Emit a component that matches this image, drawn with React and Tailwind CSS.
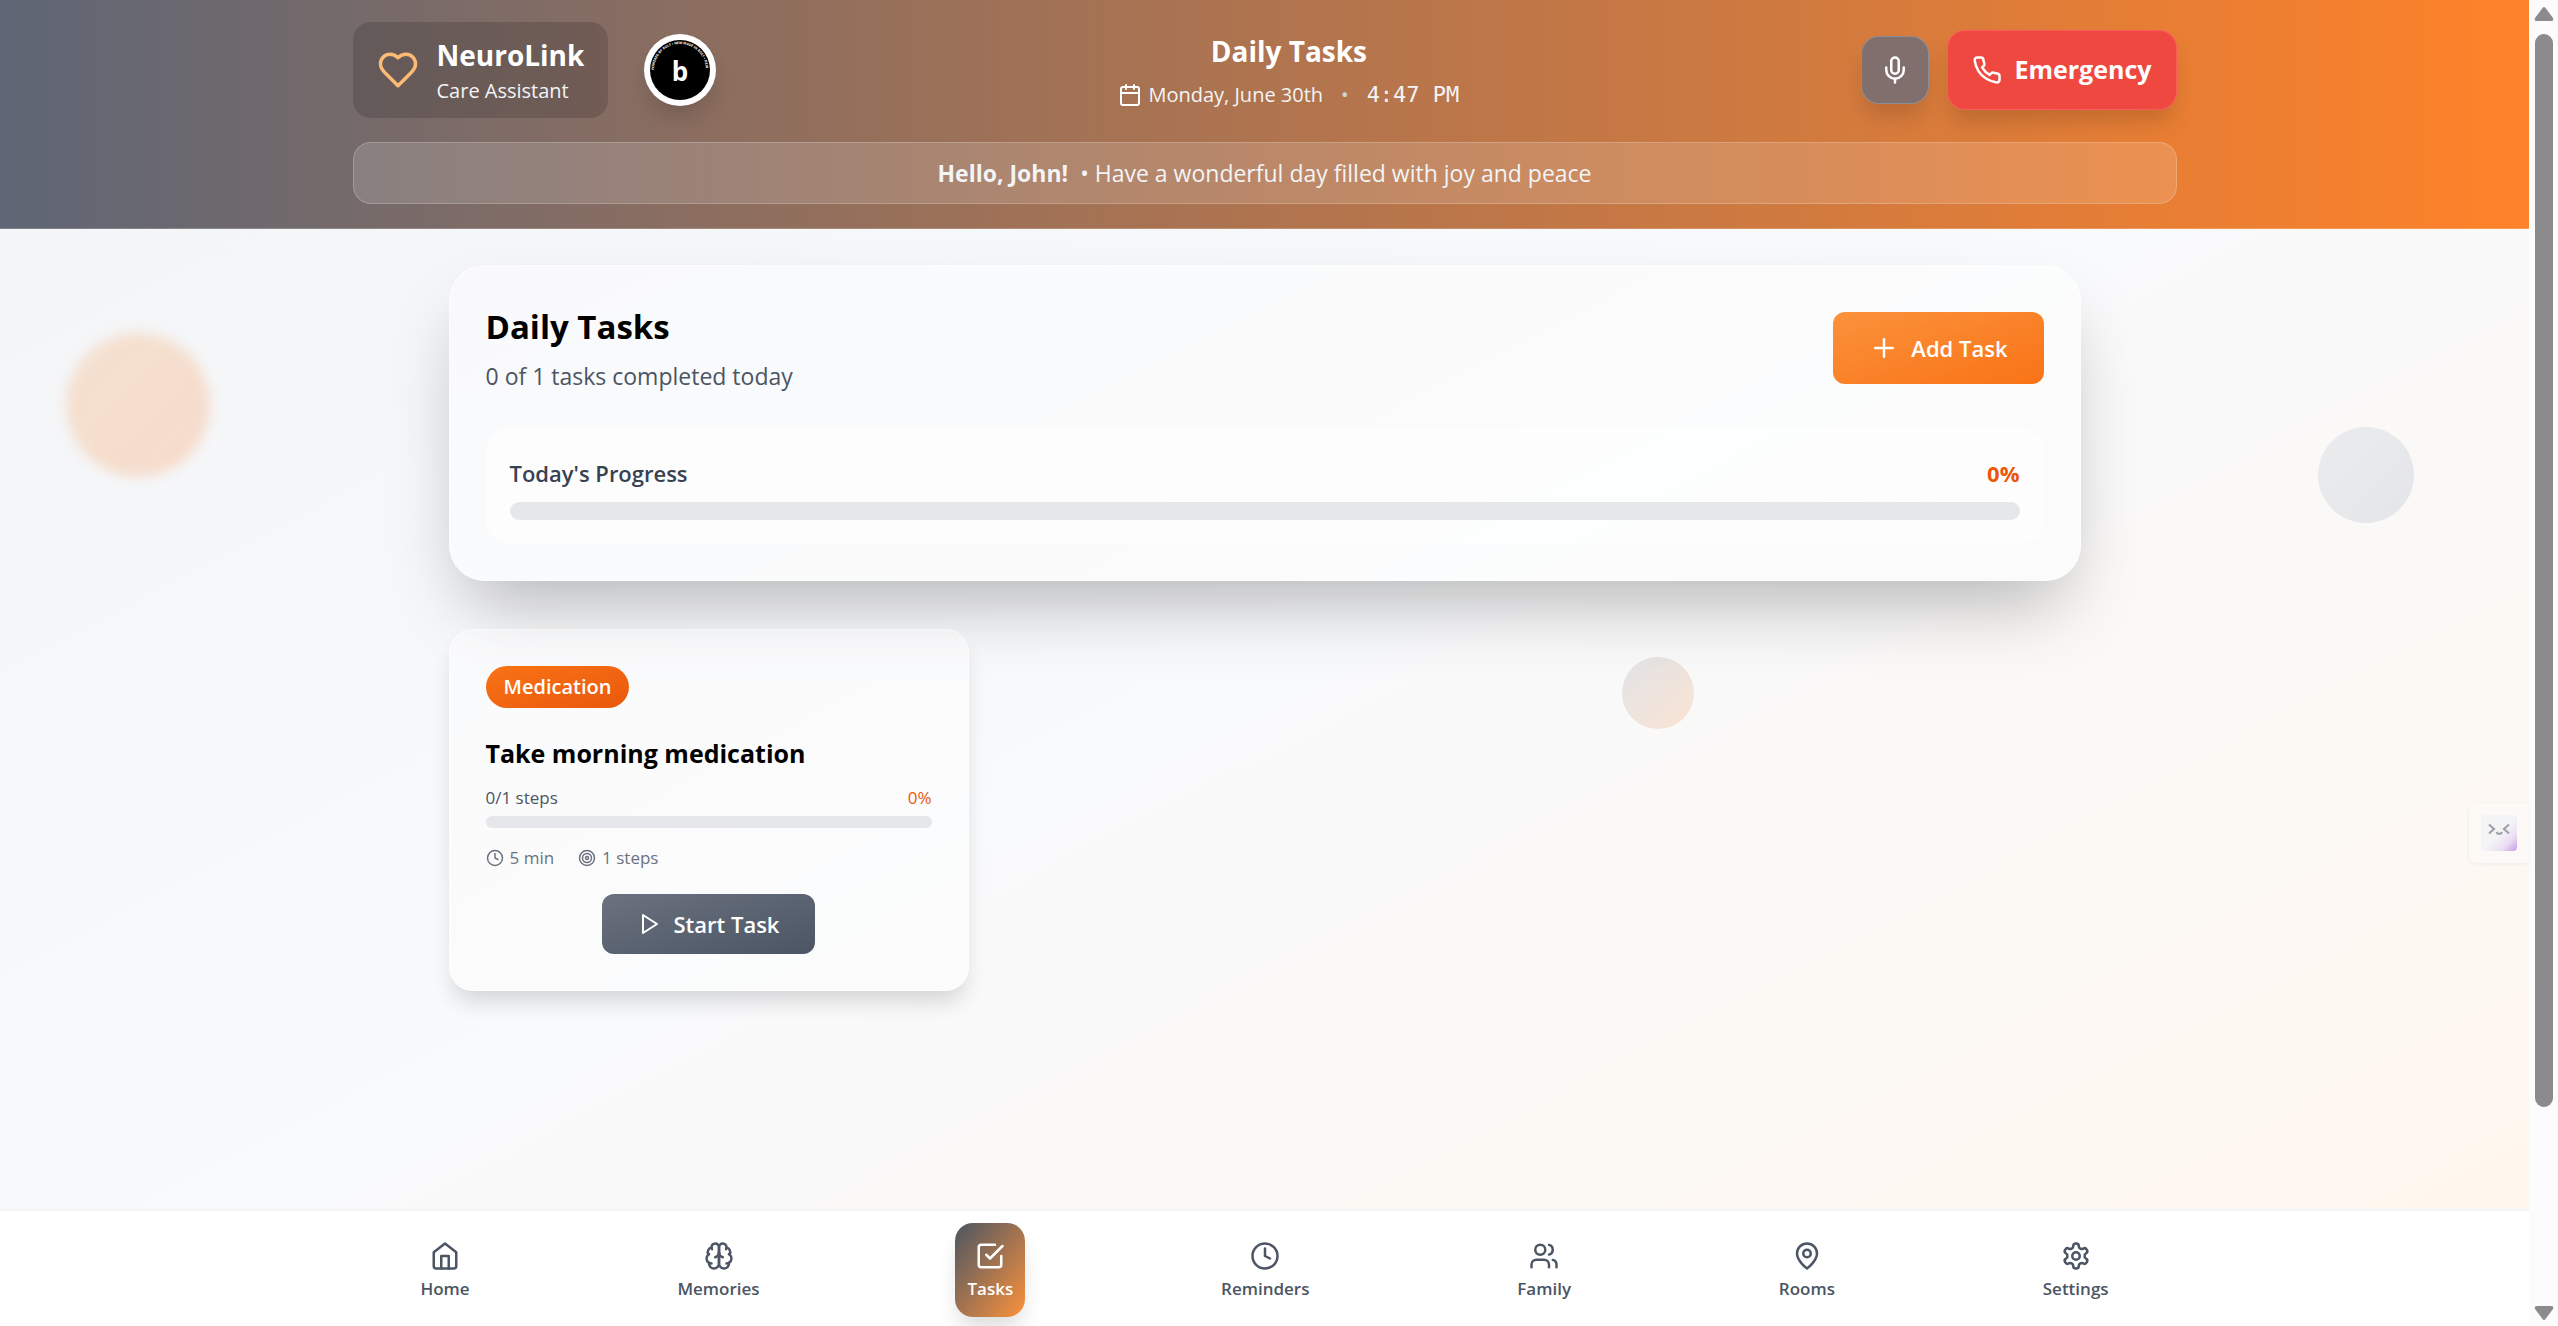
import { Calendar, Clock, Mic, Plus, Target, Users } from "lucide-react";

function Icon({ size, className, children }) {
  return (
    <svg
      width={size}
      height={size}
      viewBox="0 0 24 24"
      fill="none"
      stroke="currentColor"
      strokeWidth="2"
      strokeLinecap="round"
      strokeLinejoin="round"
      className={className}
      aria-hidden="true"
    >
      {children}
    </svg>
  );
}

function HeartIcon(props) {
  return (
    <Icon {...props}>
      <path d="M19 14c1.49-1.46 3-3.21 3-5.5A5.5 5.5 0 0 0 16.5 3c-1.76 0-3 .5-4.5 2-1.5-1.5-2.74-2-4.5-2A5.5 5.5 0 0 0 2 8.5c0 2.3 1.5 4.05 3 5.5l7 7Z" />
    </Icon>
  );
}

function PhoneIcon(props) {
  return (
    <Icon {...props}>
      <path d="M22 16.92v3a2 2 0 0 1-2.18 2 19.79 19.79 0 0 1-8.63-3.07 19.5 19.5 0 0 1-6-6 19.79 19.79 0 0 1-3.07-8.67A2 2 0 0 1 4.11 2h3a2 2 0 0 1 2 1.72 12.84 12.84 0 0 0 .7 2.81 2 2 0 0 1-.45 2.11L8.09 9.91a16 16 0 0 0 6 6l1.27-1.27a2 2 0 0 1 2.11-.45 12.84 12.84 0 0 0 2.81.7A2 2 0 0 1 22 16.92z" />
    </Icon>
  );
}

function PlayIcon(props) {
  return (
    <Icon {...props}>
      <polygon points="5 3 19 12 5 21 5 3" />
    </Icon>
  );
}

function HomeIcon(props) {
  return (
    <Icon {...props}>
      <path d="m3 9 9-7 9 7v11a2 2 0 0 1-2 2H5a2 2 0 0 1-2-2z" />
      <polyline points="9 22 9 12 15 12 15 22" />
    </Icon>
  );
}

function BrainIcon(props) {
  return (
    <Icon {...props}>
      <path d="M12 5a3 3 0 1 0-5.997.125 4 4 0 0 0-2.526 5.77 4 4 0 0 0 .556 6.588A4 4 0 1 0 12 18Z" />
      <path d="M12 5a3 3 0 1 1 5.997.125 4 4 0 0 1 2.526 5.77 4 4 0 0 1-.556 6.588A4 4 0 1 1 12 18Z" />
      <path d="M15 13a4.5 4.5 0 0 1-3-4 4.5 4.5 0 0 1-3 4" />
      <path d="M17.599 6.5a3 3 0 0 0 .399-1.375" />
      <path d="M6.003 5.125A3 3 0 0 0 6.401 6.5" />
      <path d="M3.477 10.896a4 4 0 0 1 .585-.396" />
      <path d="M19.938 10.5a4 4 0 0 1 .585.396" />
      <path d="M6 18a4 4 0 0 1-1.967-.516" />
      <path d="M19.967 17.484A4 4 0 0 1 18 18" />
    </Icon>
  );
}

function CheckIcon(props) {
  return (
    <Icon {...props}>
      <path d="m9 11 3 3L22 4" />
      <path d="M21 12v7a2 2 0 0 1-2 2H5a2 2 0 0 1-2-2V5a2 2 0 0 1 2-2h11" />
    </Icon>
  );
}

function PinIcon(props) {
  return (
    <Icon {...props}>
      <path d="M20 10c0 6-8 12-8 12s-8-6-8-12a8 8 0 0 1 16 0Z" />
      <circle cx="12" cy="10" r="3" />
    </Icon>
  );
}

function GearIcon(props) {
  return (
    <Icon {...props}>
      <path d="M12.22 2h-.44a2 2 0 0 0-2 2v.18a2 2 0 0 1-1 1.73l-.43.25a2 2 0 0 1-2 0l-.15-.08a2 2 0 0 0-2.73.73l-.22.38a2 2 0 0 0 .73 2.73l.15.1a2 2 0 0 1 1 1.72v.51a2 2 0 0 1-1 1.74l-.15.09a2 2 0 0 0-.73 2.73l.22.38a2 2 0 0 0 2.73.73l.15-.08a2 2 0 0 1 2 0l.43.25a2 2 0 0 1 1 1.73V20a2 2 0 0 0 2 2h.44a2 2 0 0 0 2-2v-.18a2 2 0 0 1 1-1.73l.43-.25a2 2 0 0 1 2 0l.15.08a2 2 0 0 0 2.73-.73l.22-.39a2 2 0 0 0-.73-2.73l-.15-.08a2 2 0 0 1-1-1.74v-.5a2 2 0 0 1 1-1.74l.15-.09a2 2 0 0 0 .73-2.73l-.22-.38a2 2 0 0 0-2.73-.73l-.15.08a2 2 0 0 1-2 0l-.43-.25a2 2 0 0 1-1-1.73V4a2 2 0 0 0-2-2z" />
      <circle cx="12" cy="12" r="3" />
    </Icon>
  );
}

const navItems = [
  { label: "Home", icon: HomeIcon },
  { label: "Memories", icon: BrainIcon },
  { label: "Tasks", icon: CheckIcon, active: true },
  { label: "Reminders", icon: Clock },
  { label: "Family", icon: Users },
  { label: "Rooms", icon: PinIcon },
  { label: "Settings", icon: GearIcon },
];

const tasks = [
  {
    category: "Medication",
    title: "Take morning medication",
    done: 0,
    steps: 1,
    minutes: 5,
  },
];

function BoltBadge() {
  return (
    <a
      href="#bolt"
      aria-label="Powered by Bolt"
      className="block size-18 rounded-full shadow-[0_15px_22px_-4px_rgba(0,0,0,0.15)]"
    >
      <svg viewBox="0 0 72 72" className="size-full">
        <circle cx="36" cy="36" r="36" fill="#fff" />
        <circle cx="36" cy="36" r="30" fill="#000" />
        <path id="badge-arc" d="M10 36a26 26 0 0 1 52 0" fill="none" />
        <text fill="#fff" fontSize="3.4" fontWeight="700" fontFamily="Open Sans, sans-serif">
          <textPath href="#badge-arc">POWERED BY BOLT • NEW MADE IN BOLT • NEW</textPath>
        </text>
        <text
          x="36"
          y="47"
          fill="#fff"
          fontSize="26"
          fontWeight="700"
          textAnchor="middle"
          fontFamily="Open Sans, sans-serif"
        >
          b
        </text>
      </svg>
    </a>
  );
}

function Header() {
  return (
    <header className="border-b border-white/20 bg-linear-to-r/srgb from-[#5f6675] to-[#ff8229]">
      <div className="mx-auto max-w-[1920px] px-12 pt-[22px] pb-6">
        <div className="flex items-center justify-between">
          <div className="flex items-center gap-9">
            <div className="flex items-center gap-[18px] rounded-[18px] bg-black/15 px-6 py-3">
              <HeartIcon size={42} className="text-[#fdba74]" />
              <div className="text-white">
                <p className="text-[28px] leading-[42px] font-bold">NeuroLink</p>
                <p className="text-[20px] leading-[30px] text-gray-100">Care Assistant</p>
              </div>
            </div>
            <BoltBadge />
          </div>

          <div className="text-center">
            <p className="mb-2 text-[28px] leading-[42px] font-bold text-white">Daily Tasks</p>
            <div className="flex items-center text-[20px] leading-[30px] text-gray-100">
              <Calendar size={24} className="mr-1.5 text-white" />
              <span>Monday, June 30th</span>
              <span className="mx-[18px] text-gray-300">•</span>
              <span className="font-['DejaVu_Sans_Mono',monospace] text-[22px]">4:47 PM</span>
            </div>
          </div>

          <div className="flex items-center gap-[18px]">
            <button
              type="button"
              aria-label="Voice input"
              className="flex size-17 items-center justify-center rounded-[18px] border border-gray-400/60 bg-[#806f6d] text-white shadow-[0_15px_22px_-4px_rgba(0,0,0,0.15)]"
            >
              <Mic size={30} />
            </button>
            <button
              type="button"
              className="flex h-20 items-center gap-3 rounded-[18px] border border-red-400/70 bg-[#ef4841] px-6 text-[25px] font-bold text-white shadow-[0_15px_22px_-4px_rgba(0,0,0,0.15)]"
            >
              <PhoneIcon size={30} />
              Emergency
            </button>
          </div>
        </div>

        <p className="mt-6 rounded-[18px] border border-white/20 bg-white/15 py-3 text-center text-[23px] leading-9 text-gray-100">
          <strong className="mr-3 font-bold">Hello, John!</strong>• Have a wonderful day filled
          with joy and peace
        </p>
      </div>
    </header>
  );
}

function ProgressBar({ label, value, className }) {
  return (
    <div
      role="progressbar"
      aria-label={label}
      aria-valuenow={value}
      aria-valuemin={0}
      aria-valuemax={100}
      className={className}
    >
      <div className="h-full rounded-full bg-[#f97316]" style={{ width: `${value}%` }} />
    </div>
  );
}

function Summary() {
  return (
    <section className="rounded-[36px] border border-white/40 bg-white/40 p-9 shadow-[0_38px_75px_-18px_rgba(0,0,0,0.28)]">
      <div className="flex items-center justify-between">
        <div>
          <h1 className="text-[33px] leading-[50px] font-bold text-black">Daily Tasks</h1>
          <p className="mt-1.5 text-[23px] leading-9 text-[#4b5563]">
            0 of 1 tasks completed today
          </p>
        </div>
        <button
          type="button"
          className="flex h-18 items-center gap-3 rounded-xl bg-linear-to-br/srgb from-[#fb923c] to-[#f97316] px-9 text-[22px] font-semibold text-white"
        >
          <Plus size={30} />
          Add Task
        </button>
      </div>

      <div className="mt-[34px] rounded-[24px] bg-white/60 p-6">
        <div className="flex justify-between text-[22px] leading-[42px]">
          <span className="font-semibold text-[#374151]">Today's Progress</span>
          <span className="font-bold text-[#ea580c]">0%</span>
        </div>
        <ProgressBar
          label="Today's progress"
          value={0}
          className="mt-2 h-[18px] overflow-hidden rounded-full bg-[#e5e7eb]"
        />
      </div>
    </section>
  );
}

function TaskCard({ task }) {
  const percent = (task.done / task.steps) * 100;

  return (
    <article className="rounded-[24px] border border-white/40 bg-white/40 p-9 shadow-[0_15px_22px_-4px_rgba(0,0,0,0.14)]">
      <p className="w-fit rounded-full bg-linear-to-br/srgb from-[#f97316] to-[#ea580c] px-[18px] py-1.5 text-[20px] leading-[30px] font-semibold text-white">
        {task.category}
      </p>
      <h2 className="mt-6 text-[25px] leading-[42px] font-bold text-black">{task.title}</h2>
      <div className="mt-3 flex justify-between text-[17px] leading-6">
        <span className="text-[#4b5563]">
          {task.done}/{task.steps} steps
        </span>
        <span className="text-[#ea580c]">{percent}%</span>
      </div>
      <ProgressBar
        label={task.title}
        value={percent}
        className="mt-1.5 h-3 overflow-hidden rounded-full bg-[#e5e7eb]"
      />
      <div className="mt-[18px] flex gap-6 text-[17px] leading-6 text-[#6b7280]">
        <span className="flex items-center gap-1.5">
          <Clock size={18} />
          {task.minutes} min
        </span>
        <span className="flex items-center gap-1.5">
          <Target size={18} />
          {task.steps} steps
        </span>
      </div>
      <button
        type="button"
        className="mx-auto mt-6 flex h-15 items-center gap-3 rounded-xl bg-linear-to-br/srgb from-[#6b7280] to-[#4b5563] px-9 text-[22px] font-semibold text-white"
      >
        <PlayIcon size={24} />
        Start Task
      </button>
    </article>
  );
}

function Backdrop() {
  return (
    <div className="pointer-events-none absolute inset-0" aria-hidden="true">
      <div className="absolute top-[104px] left-[66px] size-36 rounded-full bg-linear-to-br/srgb from-[#f4e1d1] to-[#f6dbcb] blur-[6px]" />
      <div className="absolute top-[198px] right-[115px] size-24 rounded-full bg-linear-to-br/srgb from-[#ebecee] to-[#e4e5e8]" />
      <div className="absolute top-[428px] right-[835px] size-18 rounded-full bg-linear-to-br/srgb from-[#e2e4e8] to-[#fbe3d2]" />
    </div>
  );
}

function BottomNav() {
  return (
    <nav className="border-t-2 border-gray-100 bg-white pt-3 pb-[9px]">
      <div className="mx-auto flex max-w-[1920px] justify-around px-3">
        {navItems.map((item) => (
          <a
            key={item.label}
            href={`#${item.label.toLowerCase()}`}
            className={
              item.active
                ? "flex flex-col items-center rounded-[18px] bg-linear-to-br/srgb from-[#4b5563] to-[#fb923c] px-3 pt-[18px] pb-4 text-white shadow-[0_15px_22px_-4px_rgba(0,0,0,0.14)]"
                : "flex flex-col items-center rounded-[18px] px-3 pt-[18px] pb-4 text-[#4b5563]"
            }
          >
            <item.icon size={30} />
            <span className="mt-1.5 text-[17px] leading-6 font-semibold">{item.label}</span>
          </a>
        ))}
      </div>
    </nav>
  );
}

function Assistant() {
  return (
    <button
      type="button"
      aria-label="Open assistant"
      className="absolute top-[574px] right-0 rounded-l-lg bg-[#fcf9f6] p-3 shadow-[0_1px_4px_rgba(0,0,0,0.06)]"
    >
      <svg width="36" height="36" viewBox="0 0 36 36" fill="none" className="rounded bg-gray-100">
        <defs>
          <linearGradient id="face" x1="0.2" y1="0.2" x2="1" y2="1">
            <stop offset="0.4" stopColor="#f3f4f6" />
            <stop offset="0.7" stopColor="#ecdff2" />
            <stop offset="1" stopColor="#c69be8" />
          </linearGradient>
        </defs>
        <rect width="36" height="36" fill="url(#face)" />
        <g stroke="#a1a1aa" strokeWidth="2.2">
          <path d="m8 9.5 5 4.5-5 4.5M28 9.5 23 14l5 4.5" />
          <path d="M15.5 17c1 2.5 4.5 2.5 5.5 0" />
        </g>
      </svg>
    </button>
  );
}

function Scrollbar() {
  return (
    <div
      className="flex w-[29px] shrink-0 flex-col items-center bg-[#fcfcfc] pl-px"
      aria-hidden="true"
    >
      <svg width="20" height="34" viewBox="0 0 20 34" fill="#8b8b8b">
        <path d="M8.5 8q1.500-2 3 0L19 18q1 3-1.5 3h-15Q0 21 1 18z" />
      </svg>
      <div className="h-[1073px] w-[18px] rounded-full bg-[#8b8b8b]" />
      <svg width="20" height="34" viewBox="0 0 20 34" fill="#8b8b8b" className="mt-auto">
        <path d="M8.5 27q1.500 2 3 0L19 17q1-3-1.5-3h-15Q0 14 1 17z" />
      </svg>
    </div>
  );
}

export default function App() {
  return (
    <div className="flex min-h-screen font-['Open_Sans','Noto_Sans',sans-serif]">
      <div className="flex min-w-0 flex-1 flex-col bg-linear-to-br/srgb from-[#f3f4f6] via-[#f9fafc] to-[#fff7ed]">
        <Header />
        <main className="relative flex-1">
          <Backdrop />
          <div className="relative mx-auto max-w-[1728px] px-12 py-9">
            <Summary />
            <div className="mt-12 grid grid-cols-3 gap-9">
              {tasks.map((task) => (
                <TaskCard key={task.title} task={task} />
              ))}
            </div>
          </div>
          <Assistant />
        </main>
        <BottomNav />
      </div>
      <Scrollbar />
    </div>
  );
}
